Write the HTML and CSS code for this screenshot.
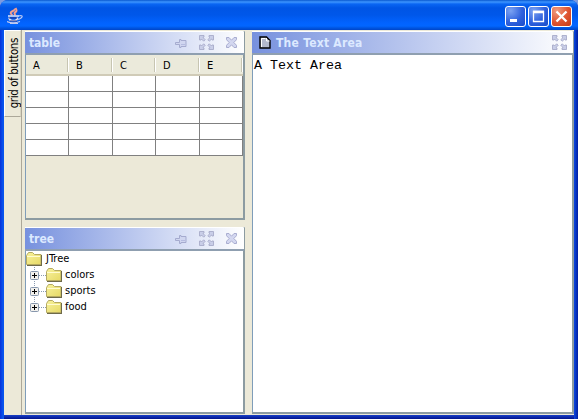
FILE: index.html
```html
<!DOCTYPE html>
<html lang="en">
<head>
<meta charset="utf-8">
<title>Docking</title>
<link rel="stylesheet" href="styles.css">
</head>
<body>
<svg class="defs" width="0" height="0">
  <defs>
    <linearGradient id="gold" x1="0" y1="0" x2="1" y2="1"><stop offset="0" stop-color="#f8f29c"/><stop offset="1" stop-color="#e6d966"/></linearGradient>
    <symbol id="pin" viewBox="0 0 12 10"><path d="M.5 4.500h4v-3h1.500v1h5v6h-5v1h-1.500v-3h-4z" fill="#d0d6f0" stroke="#a5abcf"/><path d="M6 6.500h4" stroke="#b5bce0"/></symbol>
    <symbol id="max" viewBox="0 0 15 15"><g fill="#c9cee8" stroke="#a8abc9" stroke-width=".9"><path d="M.5.5h4.500v1.500l-1 .5 2.200 2.200-1.500 1.500-2.200-2.200-.5 1H.500z"/><path transform="translate(15 0) scale(-1 1)" d="M.5.5h4.500v1.500l-1 .5 2.200 2.200-1.500 1.500-2.200-2.200-.5 1H.500z"/><path transform="translate(0 15) scale(1 -1)" d="M.5.5h4.500v1.500l-1 .5 2.200 2.200-1.500 1.500-2.200-2.200-.5 1H.500z"/><path transform="translate(15 15) scale(-1 -1)" d="M.5.5h4.500v1.500l-1 .5 2.200 2.200-1.500 1.500-2.200-2.200-.5 1H.500z"/></g></symbol>
    <symbol id="close" viewBox="0 0 11 11"><path d="M.5.5h2.500l2.500 2.700 2.500-2.700h2.500v2.200l-2.700 2.800 2.700 2.800v2.200h-2.500l-2.500-2.700-2.500 2.700h-2.500v-2.200l2.700-2.800-2.700-2.800z" fill="#d3d7f0" stroke="#a9add0"/></symbol>
    <symbol id="folder" viewBox="0 0 17 14"><path d="M.5 3.500 2.500.5h4l2 2h6.500v10H.500z" fill="url(#gold)" stroke="#b5aa62"/><path d="M1 4.500h13" stroke="#fffbd0"/><path d="M15.500 3v10.500M1 13.500h15" stroke="#6e6a4a" fill="none"/></symbol>
  </defs>
</svg>
<div class="window">
  <header class="titlebar">
    <svg class="java" width="17" height="18" viewBox="0 0 17 18"><g fill="none"><path d="M5.500 8Q2 6 5 4.500T7 2M8.500 8q-2-2 0-3t0-4" stroke="#f4a08e" stroke-width="2"/><path d="M1 9h11M2 10.500q.5 3 3 3h3q2 0 2.500-3" stroke="#e2e6f8" stroke-width="1.600"/><path d="M11 9q5-1 4 1t-5 2.500" stroke="#b8c6f4" stroke-width="1.200"/><path d="M0 14.500q6 2.500 13 0M3 16.500h8" stroke="#c3caef" stroke-width="1.200"/><path d="M2 11h8M3 14h7" stroke="#28358c"/></g></svg>
    <div class="controls">
      <span class="ctl"><svg width="21" height="21"><path d="M5 14.500h7" stroke="#fff" stroke-width="3"/></svg></span>
      <span class="ctl"><svg width="21" height="21"><path d="M5.500 5.500h10v10h-10z" fill="none" stroke="#fff" stroke-width="1.300"/><path d="M5 6h11" stroke="#fff" stroke-width="2.500"/></svg></span>
      <span class="ctl red"><svg width="21" height="21"><path d="m5.500 5.500 10 10m0-10-10 10" stroke="#fff" stroke-width="2.300"/></svg></span>
    </div>
  </header>
  <main class="content">
    <aside class="rail"><div class="tab"><span>grid of buttons</span></div></aside>
    <div class="left">
      <section class="panel table-panel">
        <h2 class="bar"><span class="name">table</span><svg class="pin"><use href="#pin"/></svg><svg class="max"><use href="#max"/></svg><svg class="close"><use href="#close"/></svg></h2>
        <div class="body beige">
          <div class="heads"><span>A</span><span>B</span><span>C</span><span>D</span><span>E</span></div>
          <div class="cells"><i></i><i></i><i></i><i></i><i></i><i></i><i></i><i></i><i></i><i></i><i></i><i></i><i></i><i></i><i></i><i></i><i></i><i></i><i></i><i></i><i></i><i></i><i></i><i></i><i></i></div>
        </div>
      </section>
      <section class="panel tree-panel">
        <h2 class="bar"><span class="name">tree</span><svg class="pin"><use href="#pin"/></svg><svg class="max"><use href="#max"/></svg><svg class="close"><use href="#close"/></svg></h2>
        <div class="body tree">
          <div class="node"><svg class="folder"><use href="#folder"/></svg><span class="root">JTree</span></div>
          <div class="node"><svg width="20" height="16"><path d="M8.500 0v16M13 8.500h7" stroke="#8a9bb0" stroke-dasharray="1 1"/><rect x="4.500" y="4.500" width="8" height="8" rx="1" fill="#f1f0ec" stroke="#8797ad"/><path d="M6 8.500h5M8.500 6v5" stroke="#000"/></svg><svg class="folder"><use href="#folder"/></svg><span>colors</span></div>
          <div class="node"><svg width="20" height="16"><path d="M8.500 0v16M13 8.500h7" stroke="#8a9bb0" stroke-dasharray="1 1"/><rect x="4.500" y="4.500" width="8" height="8" rx="1" fill="#f1f0ec" stroke="#8797ad"/><path d="M6 8.500h5M8.500 6v5" stroke="#000"/></svg><svg class="folder"><use href="#folder"/></svg><span>sports</span></div>
          <div class="node"><svg width="20" height="16"><path d="M8.500 0v5M13 8.500h7" stroke="#8a9bb0" stroke-dasharray="1 1"/><rect x="4.500" y="4.500" width="8" height="8" rx="1" fill="#f1f0ec" stroke="#8797ad"/><path d="M6 8.500h5M8.500 6v5" stroke="#000"/></svg><svg class="folder"><use href="#folder"/></svg><span>food</span></div>
        </div>
      </section>
    </div>
    <section class="panel text-panel">
      <h2 class="bar"><svg class="doc" width="12" height="13" viewBox="0 0 12 13"><path d="M1 1h6.500L11 4.500V12H1z" fill="#b3b9cc" stroke="#000" stroke-width="1.400"/><path d="M2.500 11V2.500h4M7.500 2v3h3" fill="none" stroke="#fff"/></svg><span class="name wide">The Text Area</span><svg class="max"><use href="#max"/></svg></h2>
      <div class="body text">A Text Area</div>
    </section>
  </main>
</div>
</body>
</html>
```

FILE: styles.css
```css
* { box-sizing: border-box; }
body { margin: 0; background: #7d9be0; overflow: hidden; font: 11px "DejaVu Sans Condensed", "DejaVu Sans", sans-serif; color: #000; }
svg { display: block; flex: none; }
.defs { position: absolute; }
.window { width: 578px; height: 419px; display: flex; flex-direction: column; padding: 0 4px 4px; border-radius: 8px 8px 0 0; overflow: hidden; background: linear-gradient(90deg, #0831d9 0, #0855ee 3px, #0855ee 4px, transparent 4px, transparent 574px, #0a48e0 574px, #001ea0 578px), linear-gradient(#0058ee 0, #0855dd 415px, #1941c8 415px, #00138c 419px); }
.titlebar { height: 30px; flex: none; margin: 0 -4px; display: flex; justify-content: space-between; padding: 6px 6px 0 7px; background: linear-gradient(#0958d0 0, #3d95ff 2px, #0a66f3 4px, #0055e5 8px, #0057ea 15px, #0263ff 23px, #0266ff 26px, #0055e0 28px, #0045c9 30px); }
.java { margin-top: 1px; }
.controls { display: flex; gap: 2px; }
.ctl { width: 21px; height: 21px; border: 1px solid #fff; border-radius: 3px; background: radial-gradient(circle at 25% 20%, #7ba2f2, #2f61dd 55%, #184bc9); }
.ctl svg { margin: -1px; }
.red { background: radial-gradient(circle at 25% 20%, #ef9c80, #df5431 55%, #c53b16); }
.content { flex: 1; min-height: 0; display: flex; background: #ece9d8; }
.rail { width: 18px; flex: none; border-right: 1px solid #aca899; }
.tab { width: 17px; height: 87px; border: 1px solid #fff; border-right-color: #d9d5c2; border-bottom-color: #aca899; display: flex; align-items: center; justify-content: center; padding-left: 4px; }
.tab span { writing-mode: vertical-rl; transform: rotate(180deg); white-space: nowrap; font-size: 11.500px; line-height: 15px; letter-spacing: -.4px; }
.left { width: 220px; margin: 1px 7px 0 3px; display: flex; flex-direction: column; gap: 7px; flex: none; }
.panel { display: flex; flex-direction: column; border-top: 1px solid #fff; border-right: 2px solid #8c9ba1; border-bottom: 2px solid #8c9ba1; }
.table-panel { height: 189px; }
.tree-panel { height: 187px; }
.text-panel { width: 322px; margin-top: 1px; height: 383px; }
.bar { margin: 0 -1px 0 0; height: 23px; flex: none; display: flex; align-items: center; padding: 0 7px 0 4px; border-bottom: 2px solid #8f9fb0; background: linear-gradient(90deg, #7791de, #fff); font: bold 12px/20px "DejaVu Sans Condensed", sans-serif; color: #dce9ff; }
.name { margin-right: auto; letter-spacing: -.05px; }
.wide { letter-spacing: .25px; }
.pin { width: 12px; height: 10px; margin: 0 12px 0 0; }
.max { width: 15px; height: 15px; margin-top: -1px; }
.close { width: 11px; height: 11px; margin: -1px 0 0 12px; }
.doc { margin: 0 5px 0 3px; }
.text-panel .bar { padding-right: 6px; }
.body { flex: 1; min-height: 0; background: #fff; border-left: 1px solid #7f9db9; }
.beige { background: #ece9d8; }
.heads { height: 21px; display: grid; grid-template-columns: 43px 44px 43px 44px 43px; background: #ebeadb; border-bottom: 2px solid #d0cbb7; }
.heads span { padding-left: 7px; line-height: 21px; background: linear-gradient(#c7c5b2, #c7c5b2) right 1px top 3px / 1px 14px no-repeat, linear-gradient(#fff, #fff) right 0 top 3px / 1px 14px no-repeat; }
.cells { display: grid; grid-template-columns: 43px 44px 43px 44px 43px; grid-auto-rows: 16px; }
.cells i { background: #fff; border: solid #808080; border-width: 0 1px 1px 0; }
.node { display: flex; height: 16px; align-items: center; }
.node svg { margin-right: -1px; }
.node svg:first-child:not(.folder) { margin-right: 0; }
.node span { margin-left: 3px; line-height: 16px; }
.node .root { margin-left: 4px; }
.folder { width: 17px; height: 14px; }
.text { padding: 3px 1px; font: 13.330px/15px "Liberation Mono", monospace; white-space: pre; }
```
